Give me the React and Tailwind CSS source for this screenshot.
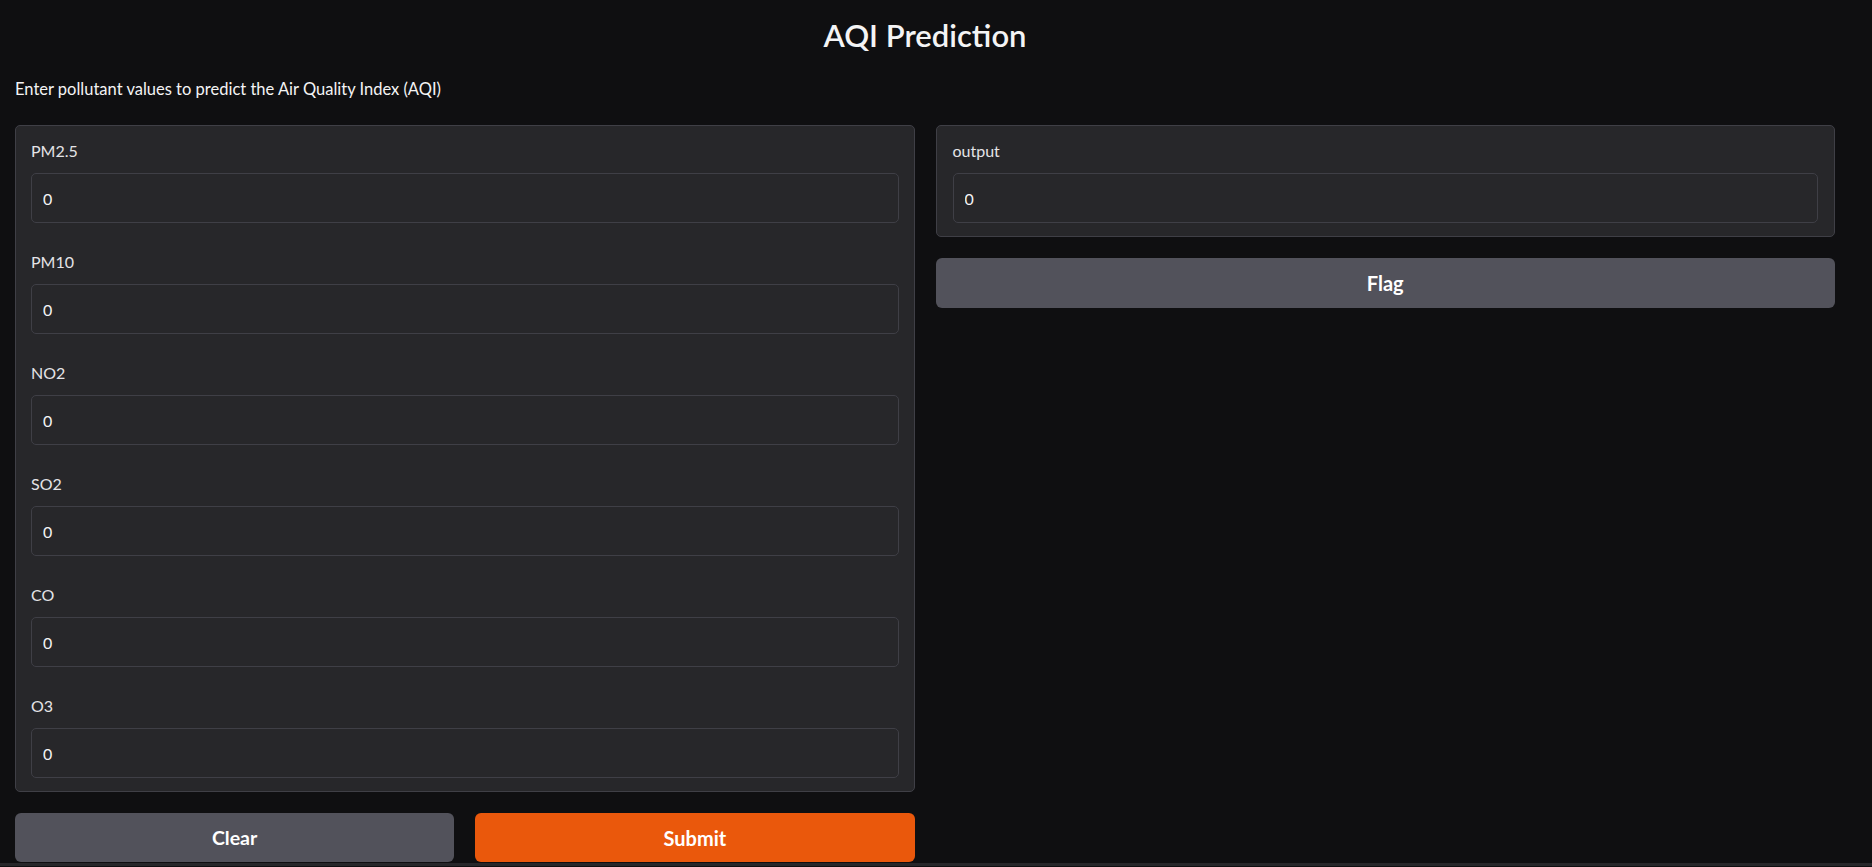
import React, { useState } from 'react';

const fields = ['PM2.5', 'PM10', 'NO2', 'SO2', 'CO', 'O3'];

const Field = ({ label, value, onChange }) => (
  <div className="flex flex-col">
    <label className="block text-[16px] leading-[17px] text-[#e4e4e7] mb-[14px]">{label}</label>
    <input
      type="text"
      value={value}
      onChange={onChange}
      className="h-[50px] w-full rounded-[5px] border border-[#3f3f46] bg-[#27272a] px-[11px] text-[16px] text-[#f4f4f5] outline-none"
    />
  </div>
);

const App = () => {
  const [values, setValues] = useState(fields.map(() => '0'));
  const [output] = useState('0');

  const handleChange = (i) => (e) => {
    const next = [...values];
    next[i] = e.target.value;
    setValues(next);
  };

  return (
    <div className="min-h-[867px] bg-[#0f0f11] font-['Lato',sans-serif] text-[#f4f4f5]">
      <div className="pl-[15px] pr-[37px]">
        <h1 className="pt-[17px] text-center text-[31px] font-semibold leading-[36px] text-[#f4f4f5]">AQI Prediction</h1>
        <p className="mt-[26px] text-[16.5px] leading-[20px] text-[#f4f4f5]">
          Enter pollutant values to predict the Air Quality Index (AQI)
        </p>

        <div className="mt-[26px] flex gap-[21px]">
          {/* inputs */}
          <div className="flex flex-1 flex-col gap-[21px]">
            <div className="rounded-[5px] border border-[#3f3f46] bg-[#27272a] px-[15px] pt-[16px] pb-[13px]">
              <div className="flex flex-col gap-[30px]">
                {fields.map((f, i) => (
                  <Field key={f} label={f} value={values[i]} onChange={handleChange(i)} />
                ))}
              </div>
            </div>
            <div className="flex gap-[21px]">
              <button
                onClick={() => setValues(fields.map(() => '0'))}
                className="h-[49px] flex-1 rounded-[6px] bg-[#52525b] text-[19.5px] font-bold text-white"
              >
                Clear
              </button>
              <button className="h-[49px] flex-1 rounded-[6px] bg-[#ea580c] text-[20px] font-bold text-white">
                Submit
              </button>
            </div>
          </div>

          {/* output */}
          <div className="flex flex-1 flex-col gap-[21px] self-start">
            <div className="rounded-[5px] border border-[#3f3f46] bg-[#27272a] px-[16px] pt-[16px] pb-[13px]">
              <Field label="output" value={output} onChange={() => {}} />
            </div>
            <button className="h-[50px] w-full rounded-[6px] bg-[#52525b] text-[20px] font-bold text-white">
              Flag
            </button>
          </div>
        </div>
      </div>
      <div className="mt-[1px] border-t-[3px] border-[#27272a]" />
    </div>
  );
};

export default App;
